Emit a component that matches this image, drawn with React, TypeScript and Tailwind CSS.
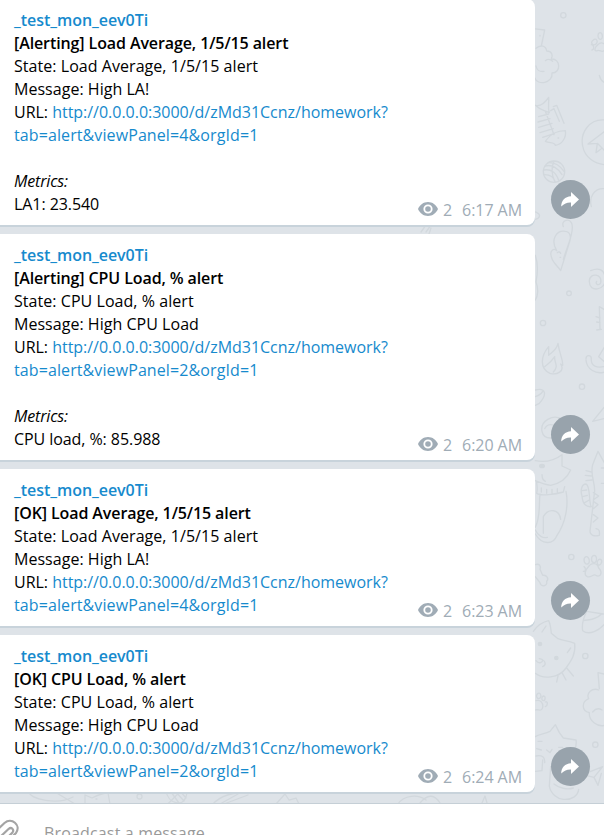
type Message = {
  title: string;
  state: string;
  text: string;
  panel: number;
  metric?: string;
  time: string;
};

const messages: Message[] = [
  { title: '[Alerting] Load Average, 1/5/15 alert', state: 'Load Average, 1/5/15 alert', text: 'High LA!', panel: 4, metric: 'LA1: 23.540', time: '6:17 AM' },
  { title: '[Alerting] CPU Load, % alert', state: 'CPU Load, % alert', text: 'High CPU Load', panel: 2, metric: 'CPU load, %: 85.988', time: '6:20 AM' },
  { title: '[OK] Load Average, 1/5/15 alert', state: 'Load Average, 1/5/15 alert', text: 'High LA!', panel: 4, time: '6:23 AM' },
  { title: '[OK] CPU Load, % alert', state: 'CPU Load, % alert', text: 'High CPU Load', panel: 2, time: '6:24 AM' },
];

function Wallpaper() {
  return (
    <svg className="absolute inset-0" width="604" height="835" fill="none" stroke="#d2d8dd" strokeWidth="4" strokeLinecap="round" strokeLinejoin="round" aria-hidden="true">
      <g transform="translate(530 0) scale(.33333)">
        <circle cx="100" cy="46" r="8" />
        <path d="M10 86l34 4-10 48M18 145c14-12 30-8 32 8c16 0 20 14 14 24c28-2 30 42 2 42c4 30-44 40-52 14M18 198c2 12 12 18 24 16M46 182c8-6 16-4 22 2M30 106v2" />
        <path d="M190 120c8-8 16 4 8 12s-20-4-8-12zM210 98c8 0 10 18 2 20s-12-18-2-20zM184 134c8 0 10 14 2 16M204 134c10-12 30 0 22 14s-16 0-24 4s-12-8 2-18M208 226c2 10 8 18 16 22" />
        <path d="M16 316c16 4 28-6 40-24c2 18-4 28 2 46c-12-8-24-4-42-22zM46 334l26 70M26 350l30-8M24 366l36-10M26 382l40-12M30 398l40-12M38 412l36-12M62 332l10-6 16 38M70 320l10-4 22 54M46 424c20-28 40-32 60-32c4 20-10 42-30 44c-2-10-16-6-30-12zM84 414h2" />
        <circle cx="72" cy="515" r="32" />
        <path d="M46 498c20-6 40 8 50 26M42 510c22-4 38 10 44 32M44 524c16 0 28 8 32 22M58 488c20 0 34 12 44 26M72 484c-8 16-8 40 2 60M92 550c14 6 14 26 0 32" />
        <path d="M224 360c-46-4-74 38-66 78c6 34 36 54 66 56M174 432l50-38M174 432l28-2 22 22M202 430l-4 28 16-12M184 620c-8-30 10-56 38-54" />
      </g>
      <g transform="translate(530 200) scale(.33333)">
        <path d="M8 35c14 0 28 10 16 20l-10 4M92 212c-8-14-24-22-28-42c-6-20 8-26 16-18c-20-34 0-62 26-58c16 2 18 18 12 34zM100 80c-8-18 16-26 24-12c12 20-14 76-24 110M90 172h2M82 158c4-4 8-2 10 2" />
        <path d="M182 212c24-10 42-4 44 24c2 36-50 44-48 6c2-26 40-20 34 6c-4 10-18 6-12-4M16 166c10 30 6 60 2 80c8 20 6 42-2 54M222 328l-14-8 2 68M198 350l12 4M200 366l10 2M200 390l14-2" />
        <circle cx="117" cy="280" r="7" /><circle cx="39" cy="369" r="8" /><circle cx="156" cy="560" r="8" />
        <path d="M60 520c-32-14-28-52-4-80v26c10-10 24-16 28-36c4 32 16 50 14 66l-6-4c14 22-12 34-32 28zM44 500c10-8 18-12 30-30c-2 18 14 28-4 46M168 476c0-12 16-12 16 0c-2 24 18 28 38 24M168 480c2 28 30 44 56 36M224 440l-18 30 18 16M16 570c32-8 36 14 12 40l-12 6M16 590c12-4 18-8 22-16" />
      </g>
      <g transform="translate(530 400) scale(.33333)">
        <path d="M100 60c-30-22-70 4-64 34s46 22 60 4M44 86c10-22 42-12 34 10M188 64l34-42M188 64l34-8" />
        <path d="M16 182c30 6 56 0 80-18v34l26 12c-14 32-40 42-60 46c-18-2-32-8-46-14M20 244c0 14 4 20 0 36c10 10 60 2 80-4l4-16M34 264v12M50 268v12M66 268v12M82 266v10M30 282c-4 40 2 66-14 100M108 274c8 40 0 94-28 134c-10 26-44 28-64-6M40 350c16-28 48-22 52 8M40 350v50M16 390c8 18 24 26 36 22M36 224c2 10-2 14 10 20" />
        <ellipse cx="36" cy="198" rx="7" ry="5" fill="#d2d8dd" />
        <path d="M224 190l-20-36-16 40c-8 28 6 50 6 78l-14 122c0 12 12 16 28 12c2-16-2-18-10-20M168 212l16 4M166 226l18 2M168 242l18-2M222 204h-8M222 250h-8M190 278l16 10-16 12M190 304l14 10-14 12M190 344l14 10-14 12M184 320c-8-8-2-64-16-68c-12 0-18 18-12 36c2 26 14 34 28 32M156 272l14-2M158 290l14-4M164 308l14-8" />
        <circle cx="124" cy="471" r="8" />
        <path d="M174 502c10-16 28-14 32 2c14 14 4 30-8 22c-8-6-14 8-26 4c-10-4-8-18 2-28M168 470c10-2 14 20 4 22s-14-18-4-22zM192 466c10 0 10 22 0 22s-10-20 0-22zM212 478c8 6-2 22-8 16s0-18 8-16zM162 500c6 4 6 16-2 14M16 494c12-4 18 4 14 14l8 18c12-2 20 10 12 18c4 16-18 18-20 4l-14-18M84 566c-8 24-2 44 12 54M92 572l-4 44M104 562l-4 58" />
      </g>
      <g transform="translate(530 600) scale(.33333)">
        <path d="M10 94c10-14 26-28 46-32c6 12 6 22 8 38l20 16c16 6 32 6 50 14c4 34-12 54-26 74c-22 32-70 34-92 16M48 78l-12 18M122 144l-10 14M110 204l20 24M96 218l12 22M84 228l-4 18M18 182c10 12 20 4 20-2c8 4 12 14 0 20M28 176l8 2" />
        <circle cx="30" cy="132" r="5" fill="#d2d8dd" /><circle cx="79" cy="174" r="5" fill="#d2d8dd" />
        <path d="M170 34c-8 16-16 36-12 58c20 16 50-2 66-20M170 34l50 8M160 62c16-4 36 0 54-20M222 222l-18-4 4 48M206 270c-20-8-38 10-30 26c-22 10-22 36 2 42c-2 24 24 44 46 38M188 336c8-10 18-12 28-6M18 302c14-4 22 8 20 20c-4 16-14 4-22 8M22 282c8-8 14 6 8 12s-14-4-8-12zM40 288c8 0 6 14 0 14s-6-12 0-14zM46 306c8-4 8 12 0 14" />
        <circle cx="166" cy="168" r="8" /><circle cx="196" cy="434" r="8" />
        <path d="M16 410c12-8 28-8 44-16l16-20 12 24 12 16 38 6c4 20-6 36-10 54M24 424h12M86 442h12M50 450l10 8 6-10M20 446l14 4M18 468c18-4 28 4 26 20M38 480l-2 32-20 2M62 500l-4 58c4 24 24 38 42 40c28 2 44-12 46-30M72 552c14 12 40 18 58 12M158 524l60-24M158 524l34 8 12 24 10-36M218 500l-26 32" />
      </g>
      <path d="M28 791c3 9 30 14 45 6M55 792l20 12M85 803v-8l7 3c6-3 10-5 16-5l2 11M96 799h1M180 792c-8 7-10 11-13 12M213 804c8-9 22-12 37-12M220 804l18-10M224 804l24-9M276 804l9-10 4 6 7-2 3 6M398 804c6-9 20-10 28-4M420 803c8-10 15-8 20 0M482 803l3-7 2 7M421 232l5-7M426 232l5-7M431 228l-2 6" strokeWidth="1.3" />
      <circle cx="139.500" cy="796.500" r="2.500" strokeWidth="1.3" />
      <path d="M166 791c1 6 5 11 11 12s9-4 10-10M171 792l8 11M175 791l9 10M180 791l6 7" strokeWidth="1.3" />
    </svg>
  );
}

function MessageRow({ message }: { message: Message }) {
  return (
    <div className="flex items-end gap-4">
      <article className="relative w-[535px] rounded-r-[8px] bg-white pt-2.5 pr-3.5 pb-[9px] pl-3.5 shadow-[0_2px_0_#c8d3db]">
        <div className="font-semibold tracking-[-0.05px] text-[#168acd]">_test_mon_eev0Ti</div>
        <div className="font-semibold tracking-[-0.1px]">{message.title}</div>
        <div className="tracking-[0.05px]">State: {message.state}</div>
        <div className="tracking-[0.03px]">Message: {message.text}</div>
        <div className="tracking-[-0.02px]">
          URL: <span className="text-[#168acd]">http://0.0.0.0:3000/d/zMd31Ccnz/homework?</span>
        </div>
        <div className="tracking-[0.1px] text-[#168acd]">tab=alert&amp;viewPanel={message.panel}&amp;orgId=1</div>
        {message.metric && (
          <>
            <div className="mt-[23px] tracking-[-0.15px] italic">Metrics:</div>
            <div className="tracking-[-0.07px]">{message.metric}</div>
          </>
        )}
        <div className="absolute right-[13px] bottom-[3px] flex items-center text-[#a0acb6]">
          <svg className="mr-[5px] mb-[3px]" width="20" height="14" viewBox="0 0 20 14" aria-hidden="true">
            <path fill="#a0acb6" fillRule="evenodd" d="M10 0C5.500 0 1.800 2.800 0 7c1.800 4.200 5.500 7 10 7s8.200-2.800 10-7C18.200 2.800 14.500 0 10 0zm0 2.400a4.600 4.600 0 1 1 0 9.200 4.600 4.600 0 0 1 0-9.200zm0 1.800a2.800 2.800 0 1 0 0 5.600 2.800 2.800 0 0 0 0-5.600z" />
          </svg>
          <span className="mr-2.5">2</span>
          <span className="tracking-[-0.05px]">{message.time}</span>
        </div>
      </article>
      <button className="mb-1.5 flex size-[39px] items-center justify-center rounded-full bg-[#98a3ac]" aria-label="Share">
        <svg className="-ml-px" width="18" height="16" viewBox="0 0 18 16" aria-hidden="true">
          <path fill="#fff" d="M10 0l8 7.500-8 7.500V10.500C6 10.300 3.500 11.500.2 14.500C.2 8.500 4 4.500 10 4.200z" />
        </svg>
      </button>
    </div>
  );
}

export default function App() {
  return (
    <main className="relative flex h-[835px] w-[604px] flex-col overflow-hidden bg-[#dee3e8] font-['Open_Sans','Noto_Sans',sans-serif] text-[16px] leading-[23px] text-black">
      <Wallpaper />
      <section className="relative -mt-px flex h-[804px] shrink-0 flex-col gap-[9px]">
        {messages.map((message) => <MessageRow key={message.time} message={message} />)}
      </section>
      <footer className="relative flex h-[60px] shrink-0 items-start border-t border-[#c5cfd6] bg-white pt-[15px]">
        <svg className="-ml-[11px] shrink-0" width="32" height="34" viewBox="0 0 32 34" fill="none" stroke="#a4a4a4" strokeWidth="2.200" strokeLinecap="round" aria-hidden="true">
          <path d="M7 12L15.500 4c7-6 17 2 11.500 10L16 25M9 20l10.500-10c3-2.500 6 .5 4 3.500L12 25" />
        </svg>
        <span className="mt-[3px] ml-[23px] tracking-[0.16px] text-[#999]">Broadcast a message...</span>
      </footer>
    </main>
  );
}
